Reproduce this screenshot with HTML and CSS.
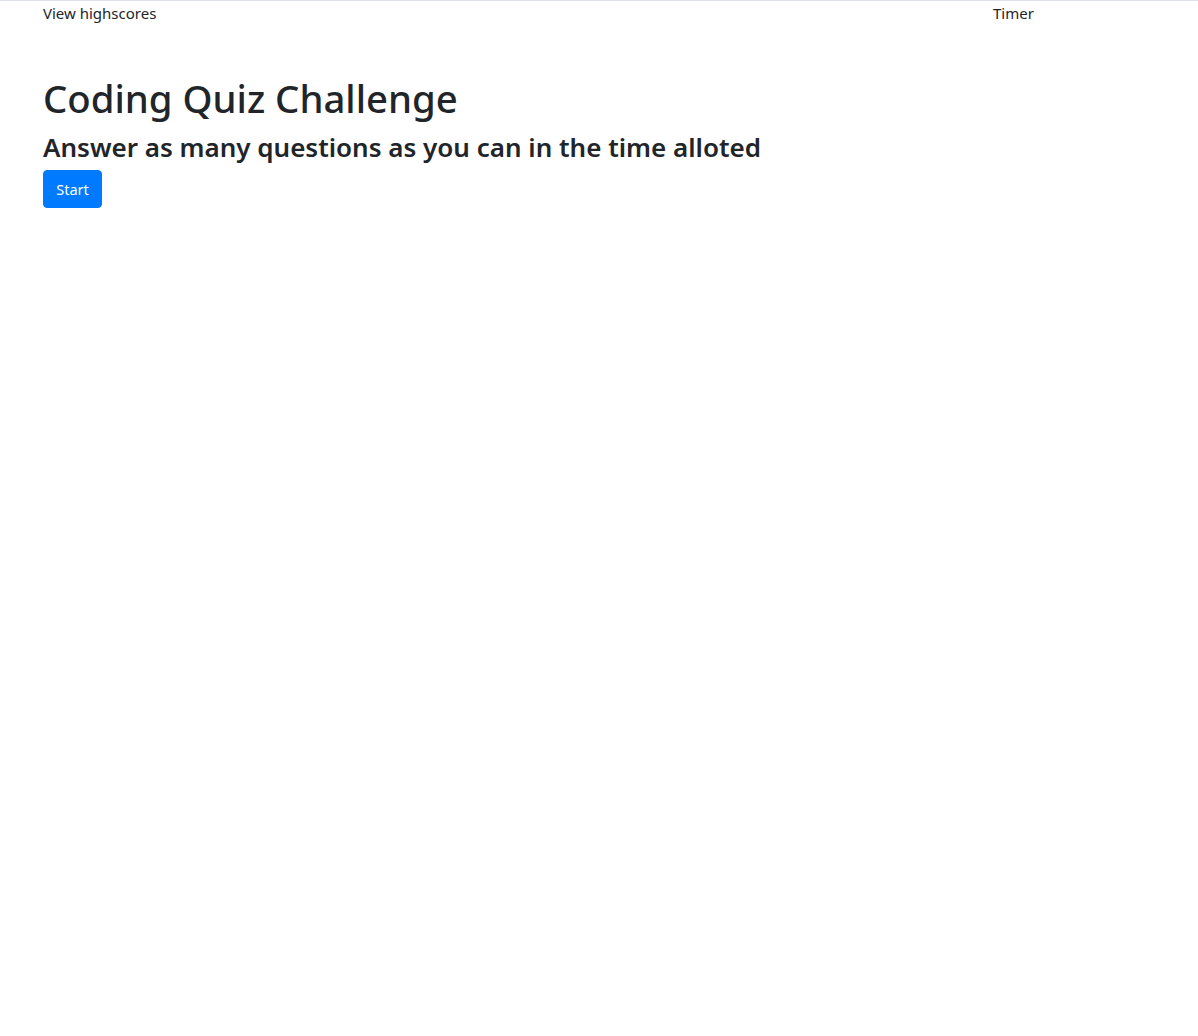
FILE: index.html
```html
<!DOCTYPE html>
<html lang="en">
<head>
<meta charset="utf-8">
<title>Coding Quiz</title>
<link rel="stylesheet" href="styles.css">
</head>
<body>
<header class="topbar">
  <a class="highscores" href="#">View highscores</a>
  <span class="timer">Timer</span>
</header>
<main class="intro">
  <h1 class="title">Coding Quiz Challenge</h1>
  <h3 class="subtitle">Answer as many questions as you can in the time alloted</h3>
  <button class="btn-start" type="button">Start</button>
</main>
</body>
</html>
```
FILE: styles.css
```css
html, body {
  margin: 0;
  padding: 0;
}
body {
  font-family: "Noto Sans", "Open Sans", sans-serif;
  font-size: 16px;
  line-height: 1.5;
  color: #212529;
  background: #fff;
  border-top: 1px solid #dee2e6;
}
.topbar {
  display: flex;
  padding: 0 0 0 43px;
  height: 24px;
  align-items: center;
}
.highscores {
  color: #212529;
  text-decoration: none;
  font-size: 15px;
  flex: 0 0 950px;
}
.timer {
  font-size: 15px;
}
.intro {
  padding: 51px 43px 0;
}
.title {
  margin: 0 0 8px;
  font-size: 38.3px;
  font-weight: 500;
  line-height: 1.2;
  height: 47px;
}
.subtitle {
  margin: 0 0 5px;
  font-size: 26px;
  font-weight: 600;
  line-height: 1.3;
}
.btn-start {
  font-family: inherit;
  font-size: 14.5px;
  line-height: 24px;
  height: 38px;
  width: 59px;
  padding: 0 12px;
  color: #fff;
  background: #007bff;
  border: 1px solid #007bff;
  border-radius: 4px;
  cursor: pointer;
}
```
